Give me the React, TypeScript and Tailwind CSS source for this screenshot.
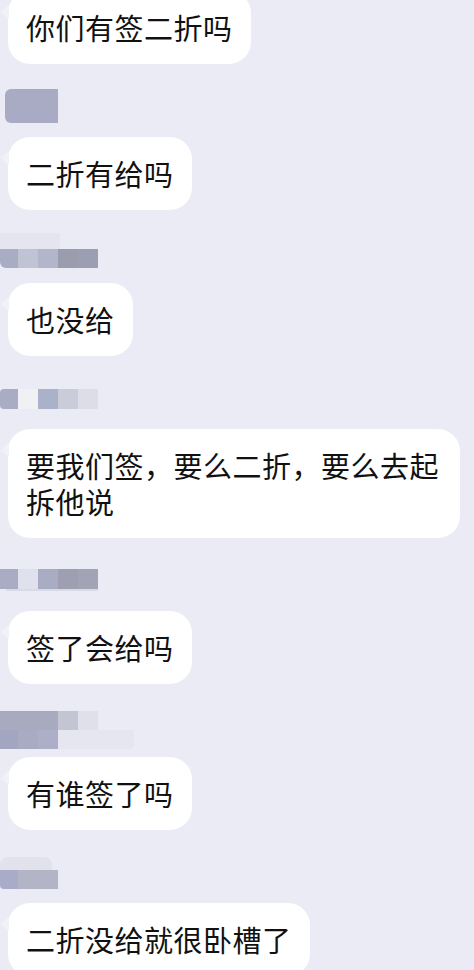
type Cell = { w: string; c: string };
type NameTag = { top: string; rows: { h: string; cells: Cell[] }[] };
type Msg = { name?: NameTag; text: string };

const messages: Msg[] = [
  { text: "你们有签二折吗" },
  {
    name: {
      top: "mt-[25px]",
      rows: [{ h: "h-[34px]", cells: [{ w: "ml-[5px] w-[53px] rounded-l-md", c: "bg-[#a9abc4]" }] }],
    },
    text: "二折有给吗",
  },
  {
    name: {
      top: "mt-[23px]",
      rows: [
        { h: "h-[16px]", cells: [{ w: "w-[60px]", c: "bg-[#e4e5ef]" }] },
        {
          h: "h-[19px]",
          cells: [
            { w: "w-[18px] rounded-bl-md", c: "bg-[#a9adc4]" },
            { w: "w-[20px]", c: "bg-[#c0c3d4]" },
            { w: "w-[20px]", c: "bg-[#b3b6ca]" },
            { w: "w-[20px]", c: "bg-[#9b9daf]" },
            { w: "w-[20px]", c: "bg-[#9c9eb1]" },
          ],
        },
      ],
    },
    text: "也没给",
  },
  {
    name: {
      top: "mt-[33px]",
      rows: [
        {
          h: "h-[20px]",
          cells: [
            { w: "w-[18px] rounded-l-sm", c: "bg-[#aaacc6]" },
            { w: "w-[20px]", c: "bg-[#f0f1f5]" },
            { w: "w-[20px]", c: "bg-[#a9b2c8]" },
            { w: "w-[20px]", c: "bg-[#cbccd9]" },
            { w: "w-[20px]", c: "bg-[#dcdde8]" },
          ],
        },
      ],
    },
    text: "要我们签，要么二折，要么去起拆他说",
  },
  {
    name: {
      top: "mt-[31px]",
      rows: [
        {
          h: "h-[20px]",
          cells: [
            { w: "w-[18px]", c: "bg-[#a9acc3]" },
            { w: "w-[20px]", c: "bg-[#dfe2ec]" },
            { w: "w-[20px]", c: "bg-[#a9adc3]" },
            { w: "w-[20px]", c: "bg-[#9e9fb0]" },
            { w: "w-[20px]", c: "bg-[#a2a3b5]" },
          ],
        },
        { h: "h-[2px]", cells: [{ w: "ml-[6px] w-[92px]", c: "bg-[#d9dae6]" }] },
      ],
    },
    text: "签了会给吗",
  },
  {
    name: {
      top: "mt-[27px]",
      rows: [
        {
          h: "h-[19px]",
          cells: [
            { w: "w-[58px]", c: "bg-[#a8aac0]" },
            { w: "w-[20px]", c: "bg-[#c3c5d3]" },
            { w: "w-[20px]", c: "bg-[#dfe0ea]" },
          ],
        },
        {
          h: "h-[19px]",
          cells: [
            { w: "w-[18px]", c: "bg-[#a3a6c0]" },
            { w: "w-[20px]", c: "bg-[#a9abc2]" },
            { w: "w-[20px]", c: "bg-[#adaec7]" },
            { w: "w-[76px] rounded-br-sm", c: "bg-[#e5e6f0]" },
          ],
        },
      ],
    },
    text: "有谁签了吗",
  },
  {
    name: {
      top: "mt-[27px]",
      rows: [
        { h: "h-[13px]", cells: [{ w: "w-[52px] rounded-t-lg", c: "bg-[#e2e2ec]" }] },
        {
          h: "h-[19px]",
          cells: [
            { w: "w-[18px] rounded-bl-sm", c: "bg-[#a9acc9]" },
            { w: "w-[40px]", c: "bg-[#b3b5c6]" },
          ],
        },
      ],
    },
    text: "二折没给就很卧槽了",
  },
];

const NameRow = ({ name }: { name: NameTag }) => (
  <div className="h-[73px] -ml-2">
    <div className={`flex flex-col ${name.top}`}>
      {name.rows.map((row, i) => (
        <div key={i} className={`flex ${row.h}`}>
          {row.cells.map((cell, j) => (
            <div key={j} className={`h-full ${cell.w} ${cell.c}`} />
          ))}
        </div>
      ))}
    </div>
  </div>
);

const Bubble = ({ text }: { text: string }) => (
  <div className="relative self-start">
    {/* faint tail */}
    <div className="absolute -left-2 top-[14px] w-0 h-0 border-y-[7px] border-y-transparent border-r-[9px] border-r-[#f1f1f8]" />
    <div className="max-w-[452px] rounded-[22px] bg-white px-[18px] pt-[18px] pb-[19px] text-[29px] leading-[36px] tracking-[0.5px] text-[#111]">
      {text}
    </div>
  </div>
);

export default function App() {
  return (
    <div
      className="h-[970px] w-[474px] overflow-hidden bg-[#ebebf5] pl-2"
      style={{ fontFamily: '"Noto Sans CJK SC", "Noto Sans", sans-serif' }}
    >
      <div className="-mt-[9px] flex flex-col">
        {messages.map((m, i) => (
          <div key={i} className="flex flex-col">
            {m.name && <NameRow name={m.name} />}
            <Bubble text={m.text} />
          </div>
        ))}
      </div>
    </div>
  );
}
